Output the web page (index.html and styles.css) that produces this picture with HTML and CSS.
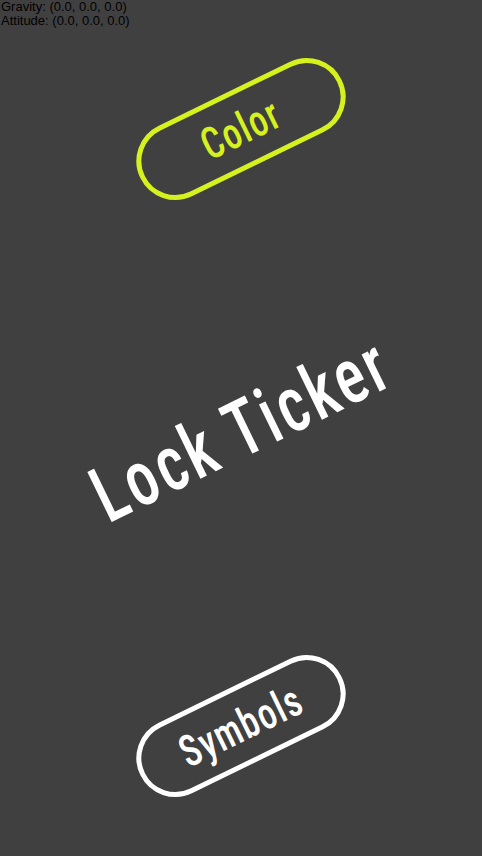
FILE: index.html
```html
<!DOCTYPE html>
<html>
<head>
<meta charset="utf-8">
<link rel="stylesheet" href="styles.css">
</head>
<body>
<div class="screen">
  <div class="debug">
    <div>Gravity: (0.0, 0.0, 0.0)</div>
    <div>Attitude: (0.0, 0.0, 0.0)</div>
  </div>
  <div class="stage">
    <div class="pill pill-color"><span class="label">Color</span></div>
    <div class="title"><span class="title-text">Lock Ticker</span></div>
    <div class="pill pill-symbols"><span class="label">Symbols</span></div>
  </div>
</div>
</body>
</html>
```
FILE: styles.css
```css
html, body {
  margin: 0;
  padding: 0;
}
body {
  background: #404040;
  width: 482px;
  height: 856px;
  overflow: hidden;
}
.screen {
  display: flex;
  flex-direction: column;
  height: 856px;
}
.debug {
  font-family: "Liberation Sans", Arial, sans-serif;
  font-size: 13px;
  line-height: 14px;
  color: #000;
  padding-left: 1px;
  height: 28px;
}
.stage {
  display: flex;
  flex-direction: column;
  align-items: center;
}
.pill {
  box-sizing: border-box;
  width: 224px;
  height: 78px;
  border-radius: 39px;
  border: 5px solid #fff;
  display: flex;
  align-items: center;
  justify-content: center;
  transform: rotate(-26deg);
}
.pill-color {
  margin-top: 62px;
  border-color: #d6f21e;
  color: #d6f21e;
}
.pill-symbols {
  margin-top: 219px;
  border-color: #ffffff;
  color: #ffffff;
}
.label {
  display: inline-block;
  font-family: "Roboto Condensed", Roboto, sans-serif;
  font-weight: 500;
  font-size: 44px;
  line-height: 1;
  letter-spacing: 1.5px;
  transform: scaleX(0.82);
}
.title {
  margin-top: 223px;
  height: 77px;
  font-family: "Roboto Condensed", Roboto, sans-serif;
  font-weight: 500;
  font-size: 78px;
  line-height: 77px;
  color: #fff;
  white-space: nowrap;
  transform: rotate(-26deg);
}
.title-text {
  display: inline-block;
  letter-spacing: 4px;
  transform: scaleX(0.8);
}
```
